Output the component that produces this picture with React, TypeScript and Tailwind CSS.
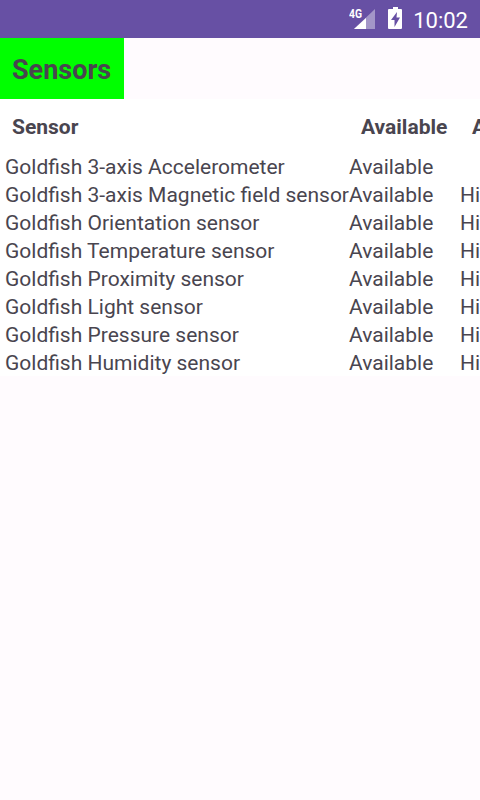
const rows = [
  ["Goldfish 3-axis Accelerometer", ""],
  ["Goldfish 3-axis Magnetic field sensor", "Hi"],
  ["Goldfish Orientation sensor", "Hi"],
  ["Goldfish Temperature sensor", "Hi"],
  ["Goldfish Proximity sensor", "Hi"],
  ["Goldfish Light sensor", "Hi"],
  ["Goldfish Pressure sensor", "Hi"],
  ["Goldfish Humidity sensor", "Hi"],
];

export default function App() {
  return (
    <div className="w-[480px] h-[800px] overflow-hidden bg-[#fffbfe] text-[#49454f] font-['Roboto',sans-serif]">
      <div className="h-[38px] bg-[#6750a4] flex items-center justify-end text-white">
        <svg width="27" height="38" viewBox="350 0 27 38" className="mr-[12px]">
          <text x="350" y="17.500" fontSize="12" fontWeight="700" fill="#fff" fontFamily="Roboto" textLength="13" lengthAdjust="spacingAndGlyphs">4G</text>
          <path d="M376 9V29H355Z" fill="#fff" fillOpacity="0.4" />
          <path d="M367 18V29H355Z" fill="#fff" />
        </svg>
        <svg width="14" height="38" viewBox="389 0 14 38" className="mr-[11px]">
          <path fillRule="evenodd" fill="#fff" d="M394 7h5v2h3a1 1 0 0 1 1 1v18a1 1 0 0 1-1 1h-12a1 1 0 0 1-1-1V10a1 1 0 0 1 1-1h4ZM398 12 392 20h3.500v7l5.500-9.500h-3.500Z" />
        </svg>
        <span className="text-[22px] leading-none mr-[12px] pt-[3px]">10:02</span>
      </div>
      <div className="flex h-[61px]">
        <div className="w-[124px] bg-[#00ff00] flex items-center pl-[12px] pt-[3px] text-[27px] font-bold">Sensors</div>
      </div>
      <div className="bg-white h-[277px] overflow-hidden">
        <div className="flex h-[53px] items-center pt-[4px] text-[21px] font-bold whitespace-nowrap">
          <span className="ml-[12px] w-[349px] shrink-0">Sensor</span>
          <span className="w-[111px] shrink-0">Available</span>
          <span>A</span>
        </div>
        <div className="mt-[2px]">
          {rows.map(([name, extra]) => (
            <div key={name} className="flex h-[28px] items-center text-[21px] whitespace-nowrap">
              <span className="ml-[5px] w-[344px] shrink-0">{name}</span>
              <span className="w-[111px] shrink-0">Available</span>
              <span>{extra}</span>
            </div>
          ))}
        </div>
      </div>
    </div>
  );
}
